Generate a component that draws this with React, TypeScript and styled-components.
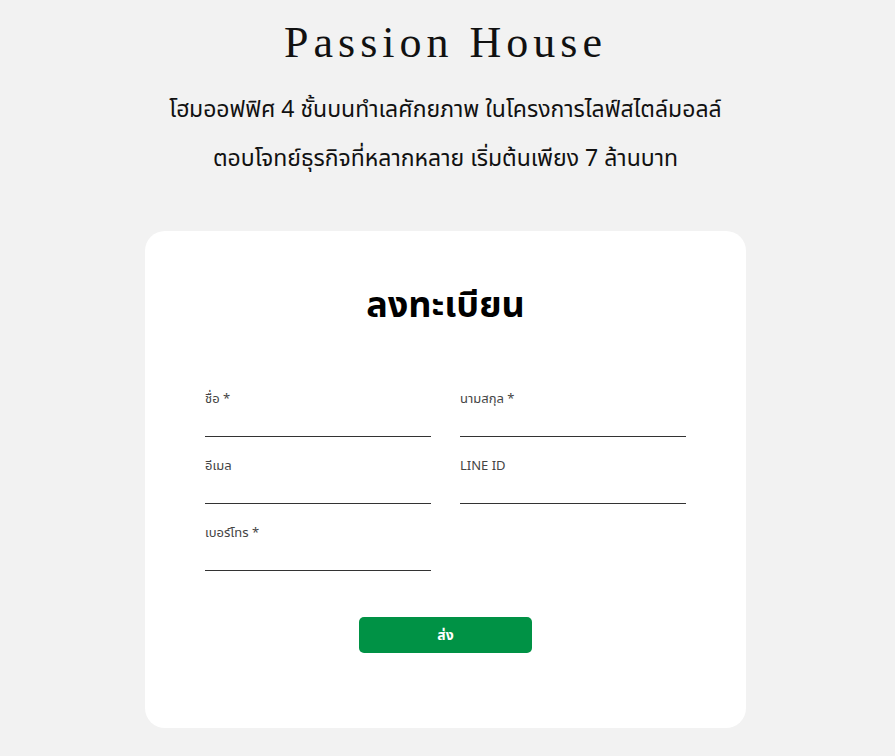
import React from 'react';
import styled, { createGlobalStyle } from 'styled-components';

const GlobalStyle = createGlobalStyle`
    html, body {
        margin: 0;
        padding: 0;
        background: #f2f2f2;
    }
    body {
        font-family: "Noto Sans Thai", "Noto Sans Thai Looped", "Noto Sans", "DejaVu Sans", sans-serif;
        color: #111;
    }
`;

const StyledPage = styled.div`
    display: flex;
    flex-direction: column;
    align-items: center;
    min-height: 756px;
    padding: 14px 4px 0 0;
    box-sizing: border-box;
`;

const StyledBrand = styled.h1`
    margin: 0;
    font-family: "Liberation Serif", "DejaVu Serif", serif;
    font-weight: 400;
    font-size: 44px;
    letter-spacing: 5px;
    line-height: 58px;
    color: #111;
`;

const StyledLead = styled.p`
    margin: 14px 0 0;
    text-align: center;
    font-size: 23px;
    line-height: 49px;
    color: #111;
`;

const StyledCard = styled.div`
    margin-top: 47px;
    width: 601px;
    box-sizing: border-box;
    background: #fff;
    border-radius: 20px;
    padding: 47px 60px 75px;
    display: flex;
    flex-direction: column;
`;

const StyledHeading = styled.h2`
    margin: 0 0 56px;
    text-align: center;
    font-size: 36px;
    font-weight: 700;
    line-height: 56px;
    color: #000;
`;

const StyledGrid = styled.div`
    display: grid;
    grid-template-columns: 226px 226px;
    column-gap: 29px;
    row-gap: 20px;
`;

const StyledField = styled.label`
    display: flex;
    flex-direction: column;
`;

const StyledLabel = styled.span`
    font-size: 13px;
    line-height: 18px;
    color: #444;
`;

const StyledInput = styled.input`
    border: none;
    border-bottom: 1px solid #333;
    outline: none;
    height: 28px;
    padding: 0;
    background: transparent;
    font-size: 14px;
`;

const StyledButton = styled.button`
    align-self: center;
    margin-top: 46px;
    width: 173px;
    height: 36px;
    border: none;
    border-radius: 5px;
    background: #009245;
    color: #fff;
    font-family: inherit;
    font-size: 14px;
    font-weight: 700;
    cursor: pointer;
`;

const fields = [
    { label: 'ชื่อ *', type: 'text' },
    { label: 'นามสกุล *', type: 'text' },
    { label: 'อีเมล', type: 'email' },
    { label: 'LINE ID', type: 'text' },
    { label: 'เบอร์โทร *', type: 'tel' },
];

function App() {
    return (
        <StyledPage>
            <GlobalStyle />
            <StyledBrand>Passion House</StyledBrand>
            <StyledLead>
                โฮมออฟฟิศ 4 ชั้นบนทำเลศักยภาพ ในโครงการไลฟ์สไตล์มอลล์
                <br />
                ตอบโจทย์ธุรกิจที่หลากหลาย เริ่มต้นเพียง 7 ล้านบาท
            </StyledLead>
            <StyledCard>
                <StyledHeading>ลงทะเบียน</StyledHeading>
                <StyledGrid>
                    {fields.map((f) => (
                        <StyledField key={f.label}>
                            <StyledLabel>{f.label}</StyledLabel>
                            <StyledInput type={f.type} />
                        </StyledField>
                    ))}
                </StyledGrid>
                <StyledButton type='button'>ส่ง</StyledButton>
            </StyledCard>
        </StyledPage>
    );
}

export default App;
